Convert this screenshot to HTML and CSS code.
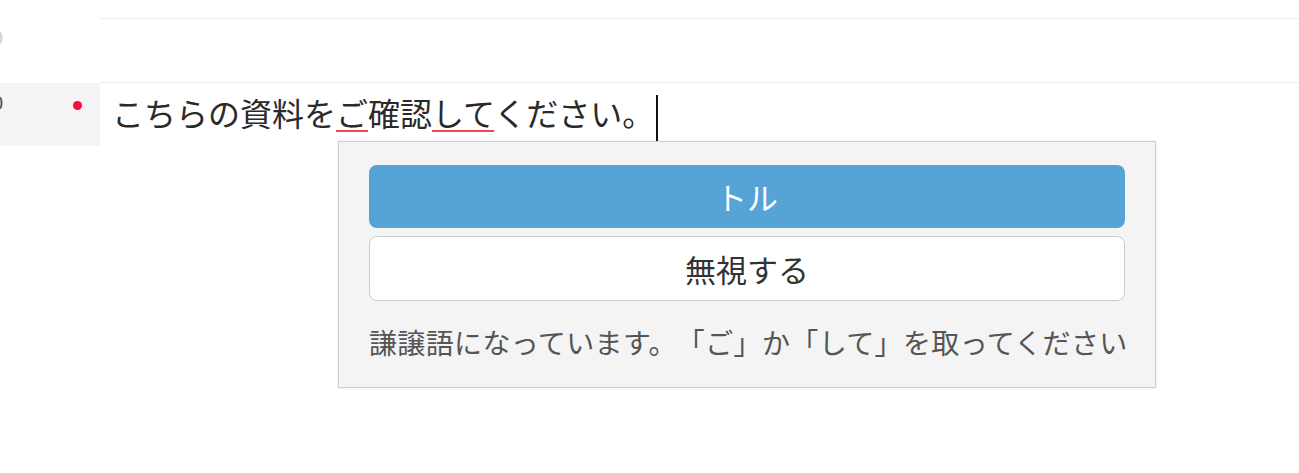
FILE: index.html
```html
<!DOCTYPE html>
<html lang="ja">
<head>
<meta charset="utf-8">
<link rel="stylesheet" href="styles.css">
</head>
<body>
<div class="editor">
  <div class="row row-top">
    <div class="gutter"></div>
    <div class="content"></div>
  </div>
  <div class="row">
    <div class="gutter"><span class="lineno lineno-dim">9</span></div>
    <div class="content bordered"></div>
  </div>
  <div class="row active">
    <div class="gutter"><span class="lineno">0</span><span class="dot"></span></div>
    <div class="content bordered">
      <span class="text">こちらの資料を<span class="err">ご</span>確認<span class="err">して</span>ください。</span><span class="caret"></span>
    </div>
  </div>
  <div class="popup">
    <button class="btn btn-primary">トル</button>
    <button class="btn btn-default">無視する</button>
    <p class="msg">謙譲語になっています。「ご」か「して」を取ってください</p>
  </div>
</div>
</body>
</html>
```

FILE: styles.css
```css
html, body {
  margin: 0;
  padding: 0;
  background: #ffffff;
}
body {
  font-family: "Noto Sans CJK JP", "Noto Sans", sans-serif;
  color: #333;
  text-spacing-trim: space-all;
}
.editor {
  position: relative;
  width: 1299px;
  height: 473px;
  overflow: hidden;
}
.row {
  display: flex;
  height: 64px;
}
.row-top {
  height: 18px;
}
.gutter {
  width: 100px;
  flex: none;
  display: flex;
  align-items: flex-start;
  overflow: hidden;
  position: relative;
}
.row.active .gutter {
  background: #f5f5f5;
  margin-top: 1px;
}
.lineno {
  font-family: "Liberation Sans", sans-serif;
  font-size: 20px;
  line-height: 20px;
  margin-top: 10px;
  margin-left: -8px;
  color: #555;
}
.lineno-dim {
  color: #d0d0d0;
}
.dot {
  position: absolute;
  left: 73px;
  top: 18px;
  width: 9px;
  height: 9px;
  border-radius: 50%;
  background: #ff0a3c;
}
.content {
  flex: 1;
  padding-left: 12px;
}
.content.bordered {
  border-top: 1px solid #eeeeee;
}
.text {
  font-size: 32px;
  line-height: 58px;
  color: #2a2a2a;
}
.err {
  text-decoration: underline;
  text-decoration-color: #f0484f;
  text-decoration-thickness: 2px;
  text-underline-offset: 4px;
}
.caret {
  display: inline-block;
  width: 2px;
  height: 46px;
  background: #111;
  margin-left: 2px;
  vertical-align: -15px;
}
.popup {
  position: absolute;
  left: 338px;
  top: 141px;
  width: 756px;
  padding: 23px 30px 24px 30px;
  background: #f4f4f4;
  border: 1px solid #cfcfcf;
  box-shadow: 0 0 2px rgba(0, 0, 0, 0.12);
  display: flex;
  flex-direction: column;
}
.btn {
  font-family: "Noto Sans CJK JP", "Noto Sans", sans-serif;
  font-size: 31px;
  border-radius: 8px;
  padding: 0;
  margin: 0;
  cursor: pointer;
}
.btn-primary {
  height: 63px;
  background: #56a3d6;
  color: #ffffff;
  border: none;
  margin-bottom: 8px;
}
.btn-default {
  height: 65px;
  background: #ffffff;
  color: #333;
  border: 1px solid #cccccc;
}
.msg {
  margin: 20px 0 0 0;
  font-size: 28px;
  line-height: 42px;
  letter-spacing: 0.37px;
  color: #555;
  white-space: nowrap;
  text-spacing-trim: space-all;
}
```
